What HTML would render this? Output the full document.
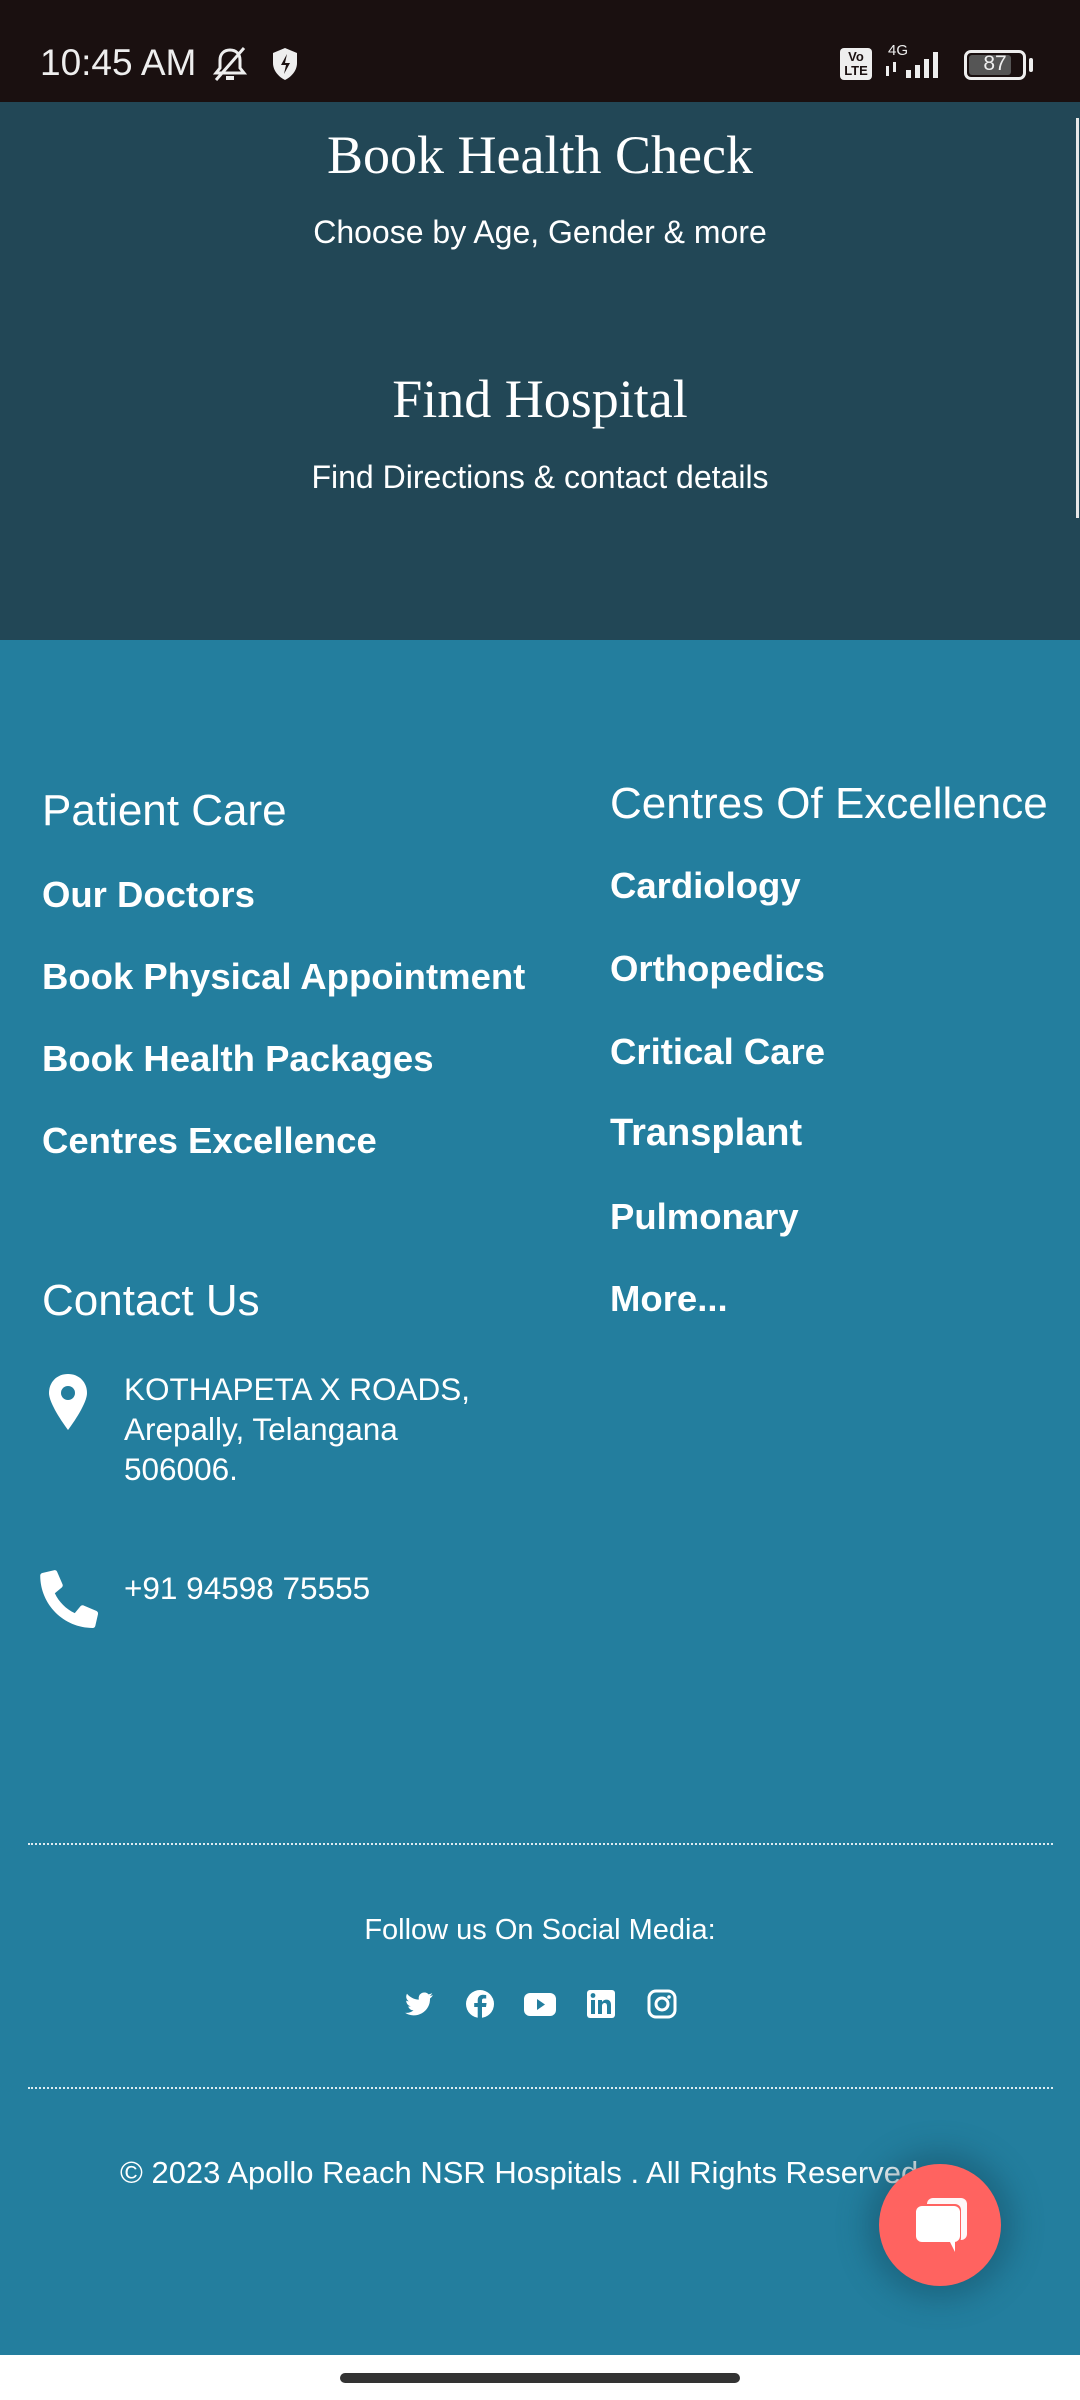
<!DOCTYPE html>
<html><head><meta charset="utf-8"><style>
*{margin:0;padding:0;box-sizing:border-box}
body{width:1080px;height:2400px;position:relative;overflow:hidden;background:#fff;font-family:"Liberation Sans",sans-serif;color:#fff}
.abs{position:absolute;white-space:nowrap}
#sb{position:absolute;left:0;top:0;width:1080px;height:102px;background:#1a1010}
#dark{position:absolute;left:0;top:102px;width:1080px;height:538px;background:#224756}
#teal{position:absolute;left:0;top:640px;width:1080px;height:1715px;background:#237e9e}
.c{left:0;width:1080px;text-align:center}
.serif{font-family:"Liberation Serif",serif}
.h{font-size:44px;font-weight:400}
.l{font-size:36.5px;font-weight:700}
.dot{position:absolute;left:28px;width:1025px;border-top:2px dotted rgba(255,255,255,0.85)}
</style></head><body>
<div id="sb"></div>
<div class="abs" style="left:40px;top:42px;font-size:37px;color:#eee">10:45 AM</div>
<svg class="abs" style="left:208px;top:44px" width="44" height="40" viewBox="0 0 44 40"><path d="M22 6c-6 0-10 4-10 10v8l-4 5h28l-4-5v-8c0-6-4-10-10-10z" fill="none" stroke="#eee" stroke-width="3"/><line x1="8" y1="36" x2="36" y2="4" stroke="#eee" stroke-width="3"/><rect x="18" y="32" width="8" height="4" fill="#eee"/></svg>
<svg class="abs" style="left:270px;top:46px" width="30" height="36" viewBox="0 0 30 36"><path d="M15 2l12 5v10c0 8-6 14-12 17C9 31 3 25 3 17V7z" fill="#eee"/><path d="M17 8l-6 11h5l-2 9 6-11h-5z" fill="#1a1010"/></svg>
<div class="abs" style="left:840px;top:48px;width:32px;height:32px;background:#eee;border-radius:4px;color:#1a1010;font-size:13px;font-weight:700;line-height:14px;text-align:center;padding-top:2px">Vo<br>LTE</div>
<div class="abs" style="left:888px;top:42px;font-size:15px;color:#eee">4G</div>
<svg class="abs" style="left:882px;top:48px" width="70" height="32"><rect x="24" y="22" width="5" height="8" fill="#eee"/><rect x="33" y="17" width="5" height="13" fill="#eee"/><rect x="42" y="11" width="5" height="19" fill="#eee"/><rect x="51" y="4" width="5" height="26" fill="#eee"/><rect x="4" y="18" width="3" height="10" fill="#eee"/><rect x="11" y="14" width="3" height="10" fill="#eee"/></svg>
<div class="abs" style="left:964px;top:50px;width:62px;height:30px;border:3px solid #eee;border-radius:7px"><div style="position:absolute;left:2px;top:2px;width:42px;height:20px;background:#555;border-radius:3px"></div><div style="position:absolute;left:0;top:-1px;width:56px;text-align:center;font-size:21px;color:#eee">87</div></div>
<div class="abs" style="left:1029px;top:58px;width:4px;height:14px;background:#eee;border-radius:2px"></div>

<div id="dark"></div>
<div class="abs" style="left:1076px;top:118px;width:3px;height:330px;background:#e8e8e8"></div>
<div class="abs" style="left:1076px;top:370px;width:3px;height:148px;background:#e8e8e8"></div>
<div class="abs c serif" style="top:124px;font-size:54px">Book Health Check</div>
<div class="abs c" style="top:214px;font-size:32px">Choose by Age, Gender &amp; more</div>
<div class="abs c serif" style="top:368px;font-size:54px">Find Hospital</div>
<div class="abs c" style="top:459px;font-size:32px">Find Directions &amp; contact details</div>

<div id="teal"></div>
<div class="abs h" style="left:42px;top:786px">Patient Care</div>
<div class="abs l" style="left:42px;top:874px">Our Doctors</div>
<div class="abs l" style="left:42px;top:956px">Book Physical Appointment</div>
<div class="abs l" style="left:42px;top:1038px">Book Health Packages</div>
<div class="abs l" style="left:42px;top:1120px">Centres Excellence</div>

<div class="abs h" style="left:610px;top:779px">Centres Of Excellence</div>
<div class="abs l" style="left:610px;top:865px">Cardiology</div>
<div class="abs l" style="left:610px;top:948px">Orthopedics</div>
<div class="abs l" style="left:610px;top:1031px">Critical Care</div>
<div class="abs l" style="left:610px;top:1112px;font-size:38px">Transplant</div>
<div class="abs l" style="left:610px;top:1196px">Pulmonary</div>
<div class="abs l" style="left:610px;top:1278px">More...</div>

<div class="abs h" style="left:42px;top:1276px">Contact Us</div>
<svg class="abs" style="left:46px;top:1372px" width="44" height="60" viewBox="0 0 44 60"><path d="M22 2C11 2 3 10 3 21c0 12 19 37 19 37s19-25 19-37C41 10 33 2 22 2z" fill="#fff"/><circle cx="22" cy="21" r="7" fill="#237e9e"/></svg>
<div class="abs" style="left:124px;top:1369px;font-size:31.5px;line-height:40px">KOTHAPETA X ROADS,<br>Arepally, Telangana<br>506006.</div>
<svg class="abs" style="left:40px;top:1570px" width="58" height="58" viewBox="0 0 512 512"><path d="M497 361l-112-48c-10-4-21-1-28 7l-50 61C229 344 167 282 131 205l61-50c8-7 11-18 7-28L151 15c-5-10-16-16-27-13L20 26C9 29 2 38 2 49c0 256 208 463 463 463 11 0 20-7 23-18l24-104c3-11-3-23-15-29z" fill="#fff"/></svg>
<div class="abs" style="left:124px;top:1570px;font-size:31.5px">+91 94598 75555</div>

<div class="dot" style="top:1843px"></div>
<div class="abs c" style="top:1914px;font-size:29px">Follow us On Social Media:</div>
<svg class="abs" style="left:403px;top:1986px" width="280" height="36" viewBox="0 0 280 36">
<path d="M30 9c-1 .5-2 .8-3.3 1 1.2-.7 2-1.8 2.5-3-1.1.7-2.4 1.1-3.6 1.4a5.7 5.7 0 00-9.8 5.2C11 13.4 6.8 11.1 4 7.7c-1.6 2.7-.6 6 1.8 7.6-.9 0-1.8-.3-2.6-.7 0 2.8 2 5.2 4.6 5.7-.8.2-1.7.3-2.6.1.7 2.3 2.9 4 5.3 4A11.5 11.5 0 012 26.8 16.2 16.2 0 0027 12.5c1.2-.9 2.2-2 3-3.5z" fill="#fff"/>
<circle cx="77" cy="18" r="14" fill="#fff"/><path d="M79 32V21h4l.6-4H79v-2.5c0-1.2.4-2 2-2h2.2V9a28 28 0 00-3.2-.2c-3.2 0-5.3 2-5.3 5.5V17h-3.5v4h3.5v11z" fill="#237e9e"/>
<rect x="121" y="7" width="32" height="23" rx="6" fill="#fff"/><path d="M134 13v11l8-5.5z" fill="#237e9e"/>
<rect x="184" y="4" width="28" height="28" rx="3" fill="#fff"/><rect x="188" y="14" width="4" height="14" fill="#237e9e"/><circle cx="190" cy="9.5" r="2.4" fill="#237e9e"/><path d="M195 14h4v2c1-1.6 2.5-2.4 4.5-2.4 3 0 4.5 2 4.5 5.5V28h-4v-8c0-2-.7-3-2.2-3-1.6 0-2.8 1-2.8 3.2V28h-4z" fill="#237e9e"/>
<rect x="246" y="5" width="26" height="26" rx="7" fill="none" stroke="#fff" stroke-width="3"/><circle cx="259" cy="18" r="6" fill="none" stroke="#fff" stroke-width="3"/><circle cx="266" cy="11" r="1.8" fill="#fff"/>
</svg>
<div class="dot" style="top:2087px"></div>
<div class="abs" style="left:120px;top:2155px;font-size:31px">© 2023 Apollo Reach NSR Hospitals . All Rights Reserved</div>
<div class="abs" style="left:879px;top:2164px;width:122px;height:122px;border-radius:50%;background:#ff6360;box-shadow:0 0 30px 12px rgba(20,70,90,0.45)"></div>
<svg class="abs" style="left:905px;top:2190px" width="70" height="72" viewBox="0 0 70 72"><rect x="22" y="8" width="40" height="42" rx="6" fill="#fff" opacity="0.95"/><rect x="8" y="14" width="48" height="40" rx="6" fill="#ff6360"/><rect x="11" y="16" width="44" height="36" rx="6" fill="#fff"/><path d="M44 50l6 12 0-12z" fill="#fff"/></svg>
<div class="abs" style="left:340px;top:2373px;width:400px;height:10px;border-radius:5px;background:#333"></div>
</body></html>
